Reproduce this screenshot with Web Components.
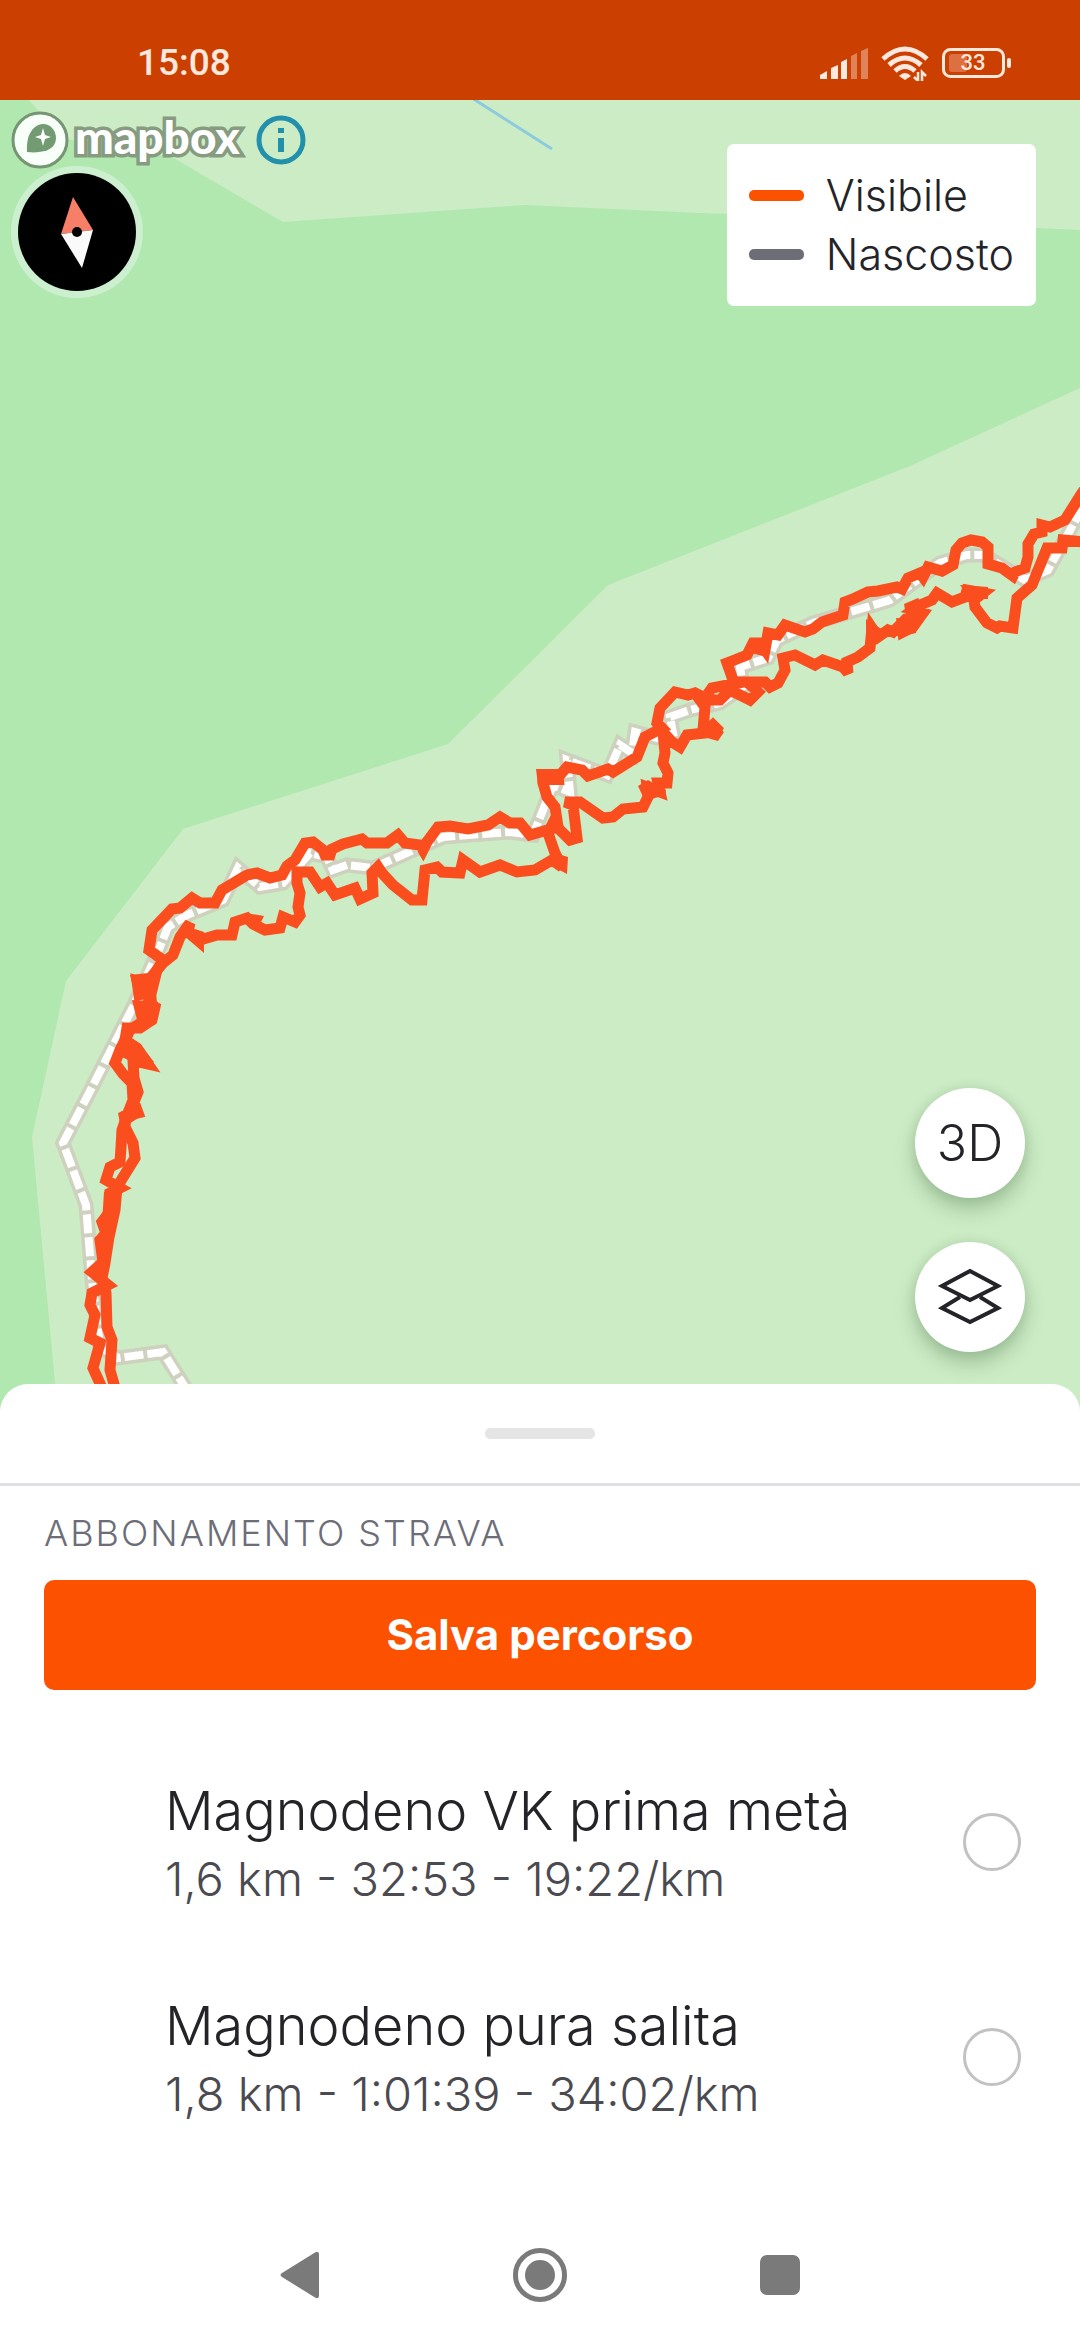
<!DOCTYPE html>
<html lang="it">
<head>
<meta charset="utf-8">
<meta name="viewport" content="width=device-width, initial-scale=1">
<title>Percorso</title>
<style>
  html, body { margin: 0; height: 100%; }
  body { font-family: Inter, "Liberation Sans", sans-serif; color: #242428; background: #fff; }
</style>
</head>
<body>
<route-screen></route-screen>

<script>
const define = (name, html, setup) => {
  const tpl = document.createElement('template');
  tpl.innerHTML = html;
  customElements.define(name, class extends HTMLElement {
    constructor() {
      super();
      this.attachShadow({ mode: 'open' }).append(tpl.content.cloneNode(true));
    }
    connectedCallback() { if (setup) setup(this, this.shadowRoot); }
  });
};

define('status-bar', `
<style>
  :host { display: flex; justify-content: space-between; align-items: center; height: 100px; box-sizing: border-box;
    padding: 26px 68px 0 137px; background: #cb4000; color: #ffe9df; font-family: Roboto, sans-serif; font-weight: 500; }
  .time { font-size: 37px; line-height: 44px; }
  .icons { display: flex; align-items: center; gap: 13px; }
  svg { display: block; }
  .battery { display: grid; place-items: center; width: 70px; height: 30px; font-size: 22px; line-height: 30px; }
  .battery > * { grid-area: 1 / 1; }
  .battery span { justify-self: start; width: 62px; text-align: center; }
</style>
<span class="time">15:08</span>
<div class="icons">
  <svg width="48" height="36" viewBox="819 44 48 36" fill="#ffe9df" aria-label="Segnale">
    <path d="M819 78v-4l7-4v8zM830 78V67l7-3v14zM840 78V61l6-3v20z"/>
    <path opacity=".4" d="M850 78V55l6-3v26zM860 78V50l7-3v31z"/>
  </svg>
  <svg width="48" height="36" viewBox="879 44 48 36" fill="none" stroke="#ffe9df" stroke-width="5" aria-label="Wi-Fi">
    <path d="M881 58q22-20 44 0M887 64q16-14 32 0M893 70q10-9 20 0"/>
    <path d="M897 75q6-6 12 0l-6 4z" fill="#ffe9df" stroke="none"/>
    <path d="M916 71v9l-4-4M920 80v-9l4 4" stroke-width="2.5"/>
  </svg>
  <div class="battery">
    <svg width="70" height="30" viewBox="941 47 70 30">
      <rect x="948" y="53" width="18" height="18" rx="3" fill="#dc7040"/>
      <rect x="942.5" y="48.5" width="60" height="27" rx="7" fill="none" stroke="#ffe9df" stroke-width="3"/>
      <rect x="1006" y="57" width="4" height="10" rx="2" fill="#ffe9df"/>
    </svg>
    <span>33</span>
  </div>
</div>`);

define('map-legend', `
<style>
  :host { display: block; background: #fff; border-radius: 7px; padding: 22px; font-weight: 300; font-size: 43px; line-height: 59px; }
  ul { list-style: none; margin: 0; padding: 0; }
  li { display: flex; align-items: center; gap: 22px; }
  i { width: 55px; height: 11px; border-radius: 5px; background: #fc5200; }
  .hidden i { background: #6d6d78; }
</style>
<ul><li><i></i>Visibile</li><li class="hidden"><i></i>Nascosto</li></ul>`);

define('map-button', `
<style>
  :host { display: block; }
  button { display: grid; place-items: center; width: 110px; height: 110px; border: 0; padding: 0; border-radius: 50%;
    background: #fff; color: #242428; font: 300 50px/60px Inter, sans-serif; box-shadow: 0 11px 20px rgba(40,80,40,.28), 0 0 12px rgba(40,80,40,.1); }
</style>
<button type="button"><slot></slot></button>`, (el, root) => {
  root.querySelector('button').setAttribute('aria-label', el.getAttribute('label'));
});

define('map-attribution', `
<style>
  :host { display: flex; align-items: center; gap: 8px; }
  a, button { display: flex; align-items: center; padding: 0; border: 0; background: none; color: #fff; text-decoration: none; }
  .word { padding-bottom: 6px; font: 900 46px/54px Lato, sans-serif; -webkit-text-stroke: 7px #869b80; paint-order: stroke fill; }
  .brand { gap: 6px; height: 60px; }
  button { margin-left: 8px; }
  svg { display: block; }
</style>
<a class="brand" href="#mapbox">
  <svg width="58" height="60" viewBox="0 0 58 60">
    <circle cx="29" cy="30" r="27" fill="#f8fff8" stroke="#759573" stroke-width="3"/>
    <path d="M16 42C15 26 21 15 32 14c8 0 13 7 13 14 0 10-10 16-29 14z" fill="#729b74"/>
    <path d="M32 18l2 7 6 2-6 2-2 7-2-7-6-2 6-2z" fill="#fff"/>
  </svg>
  <span class="word">mapbox</span>
</a>
<button type="button" aria-label="Informazioni">
  <svg width="50" height="50" viewBox="0 0 50 50">
    <circle cx="25" cy="25" r="22" fill="none" stroke="#2390ab" stroke-width="5"/>
    <path d="M22 13h6v5h-6zM22 23h6v14h-6z" fill="#2390ab"/>
  </svg>
</button>`);

define('route-map', `
<style>
  :host { display: block; position: relative; overflow: hidden; background: #b0e8af; }
  .canvas { display: block; position: absolute; inset: 0; width: 100%; height: 100%; }
  map-attribution { position: absolute; left: 11px; top: 10px; }
  .compass { position: absolute; left: 10px; top: 65px; padding: 0; border: 0; background: none; }
  .compass svg { display: block; }
  map-legend { position: absolute; right: 44px; top: 44px; }
  .tools { position: absolute; right: 55px; bottom: 60px; display: flex; flex-direction: column; gap: 44px; }
</style>
<svg class="canvas" viewBox="0 100 1080 1313" preserveAspectRatio="xMidYMin slice" aria-hidden="true">
  <g fill="#ccecc5">
    <path d="M29 100L62 138 90 144 172 157 283 222 525 205 700 213 880 219 1036 228 1080 230V100z"/>
    <path d="M1080 388L910 466 608 585 448 744 183 829 66 981 32 1137 55 1383 60 1413H1080z"/>
  </g>
  <path d="M472 98L552 149" fill="none" stroke="#8ccbdc" stroke-width="3"/>
  <g fill="none">
    <path stroke="#cdd1bd" stroke-width="15" d="M1084 505L1048 570 1025 580 983 555 967 555 940 563 890 600 867 607 813 623 777 640 768 658 740 667 743 687 720 703 690 710 670 717 673 733 657 738 635 732 632 753 620 745 607 775 567 760 570 792 553 785 533 835 510 832 443 837 420 847 373 868 347 865 333 870 327 857 310 853 283 883 260 887 238 868 223 900 187 915 168 927 160 947 133 1007 87 1097 63 1143 86 1205 92 1280 100 1347 118 1358 163 1352 190 1395"/>
    <path stroke="#fff" stroke-width="8" stroke-dasharray="19 4" d="M1084 505L1048 570 1025 580 983 555 967 555 940 563 890 600 867 607 813 623 777 640 768 658 740 667 743 687 720 703 690 710 670 717 673 733 657 738 635 732 632 753 620 745 607 775 567 760 570 792 553 785 533 835 510 832 443 837 420 847 373 868 347 865 333 870 327 857 310 853 283 883 260 887 238 868 223 900 187 915 168 927 160 947 133 1007 87 1097 63 1143 86 1205 92 1280 100 1347 118 1358 163 1352 190 1395"/>
  </g>
  <g fill="none" stroke="#fb4e1f" stroke-width="11" stroke-miterlimit="3">
    <path d="M1084 490L1080 496 1065 520 1050 527 1042 525 1042 532 1034 534 1028 544 1028 557 1025 568 1015 572 1013 576 1002 568 988 564 988 547 982 542 971 540 962 543 956 550 953 565 942 571 928 567 923 577 920 573 908 578 902 589 897 587 878 591 868 592 853 599 845 602 843 615 822 622 813 629 805 632 785 625 778 635 768 633 765 650 760 643 753 643 747 655 732 661 727 663 733 680 738 683 712 688 705 698 695 693 688 695 675 692 660 708 657 723 662 728 645 737 637 757 613 772 608 769 588 776 582 770 567 767 560 775 543 775 543 783 547 797 555 807 557 820 558 827 530 835 520 823 510 823 500 817 488 825 468 829 450 826 438 827 427 842 423 850 420 845 405 843 398 835 387 843 367 843 362 839 343 844 332 849 330 855 325 855 323 850 313 842 305 843 295 860 287 866 282 875 270 878 257 873 247 875 222 890 215 903 200 903 192 898 180 908 172 909 152 930 149 950 163 960 157 970 152 990 148 1003 155 1007 152 1020 140 1028 127 1028 125 1040 137 1048 148 1064 139 1062 133 1060 134 1078 138 1092 134 1102 138 1113 126 1116 125 1127 133 1143 135 1158 117 1187 115 1210 109 1237 105 1263 102 1278 106 1293 107 1327 112 1340 110 1370 117 1395"/>
    <path d="M1084 542L1063 540 1062 548 1047 548 1032 585 1017 598 1013 628 1000 626 997 628 987 623 975 607 974 600 983 593 967 590 965 597 952 602 937 593 932 600 920 605 913 610 923 613 913 627 903 632 902 623 893 632 888 630 878 637 872 628 870 648 858 657 847 662 848 673 843 667 823 660 815 665 795 655 783 658 785 670 778 683 770 687 765 682 747 682 758 692 750 700 730 690 720 700 700 700 705 707 703 730 720 732 713 725 705 733 687 735 680 747 672 742 663 732 665 753 663 763 668 773 667 783 658 783 660 792 647 787 648 797 643 807 623 809 613 817 603 818 580 802 565 802 573 805 577 838 570 840 553 823 548 833 555 853 562 867 552 860 535 870 517 872 500 865 480 872 463 860 460 873 442 872 437 867 425 870 422 900 412 900 393 885 382 873 378 867 372 873 373 893 360 899 355 888 335 895 327 883 320 887 310 872 297 872 297 883 300 893 298 907 300 915 295 922 283 917 280 928 265 930 253 924 247 918 235 922 232 935 217 935 200 940 188 932 190 923 180 937 173 955 163 963 153 975 150 985 137 981 139 995 150 990 152 1007 145 1020 130 1030 120 1050 115 1063 123 1074 132 1083 133 1100 128 1113 122 1130 121 1147 120 1162 110 1167 106 1180 120 1188 110 1193 111 1210 102 1222 106 1233 100 1240 103 1262 92 1272 108 1285 92 1293 90 1305 95 1315 90 1338 100 1343 93 1368 102 1388"/>
  </g>
  <path fill="#fb4e1f" d="M130 975l27-3-1 30-20-4zM536 769h28v16h-26zM132 1000l26 2-2 22-16 8zM118 1045l24 2 12 15-8 7-24-12zM551 852l17 5-1 17-15-8zM705 718l19 14-6 9-18-5zM904 604l14-6 10 14-7 10-14-1zM960 585l28 2v12h-18zM183 935l12-6 9 3v21zM246 913l18 3-6 12-12-4zM638 786l10-6 18 10-1 5-20 6zM896 618l22 2-2 13-17 4zM866 619l17 11-7 14-10-6zM118 1113l20-8 5 10-22 14zM104 1192h15l-6 44-12 2zM100 1240h10l-2 28-12 4zM753 638l14 4-4 14-12-3z"/>
</svg>
<map-attribution></map-attribution>
<button class="compass" type="button" aria-label="Bussola">
  <svg width="134" height="134" viewBox="0 0 134 134">
    <circle cx="67" cy="67" r="66" fill="#ccf0cf"/><circle cx="67" cy="67" r="59"/>
    <path d="M63 32L83 65 51 69z" fill="#f77f67"/><path d="M51 69L83 65 72 103z" fill="#fafafa"/>
    <circle cx="67" cy="67" r="5"/>
  </svg>
</button>
<map-legend></map-legend>
<div class="tools">
  <map-button label="3D">3D</map-button>
  <map-button label="Livelli">
    <svg width="66" height="58" viewBox="0 0 66 58" fill="none" stroke="#242428" stroke-width="4">
      <path d="M33 3L61 18 33 32 5 18z"/><path d="M23 29L5 40 33 54 61 40 43 29"/>
    </svg>
  </map-button>
</div>`);

define('route-option', `
<style>
  :host { display: block; }
  label { display: flex; align-items: center; justify-content: space-between; height: 215px; padding: 0 59px 0 165px; }
  .text { padding-top: 6px; font-weight: 300; }
  .title, .meta { display: block; line-height: 68px; }
  .title { font-size: 54px; }
  .meta { font-size: 47px; color: #4b4a50; }
  input { appearance: none; flex: none; width: 58px; height: 58px; margin: 0; border: 3px solid #c2c2c2; border-radius: 50%; }
  input:checked { border: 16px solid #fc5200; }
</style>
<label for="pick">
  <span class="text"><slot class="title" name="title"></slot><slot class="meta" name="meta"></slot></span>
  <input type="radio" id="pick" name="route">
</label>`);

define('bottom-sheet', `
<style>
  :host { display: block; position: relative; background: #fff; border-radius: 28px 28px 0 0; }
  .grip { display: flex; justify-content: center; padding: 44px 0; border-bottom: 3px solid #dfdfe6; }
  .grip i { width: 110px; height: 11px; border-radius: 5px; background: #e5e5e5; }
  h2 { margin: 0; padding: 22px 44px; font-size: 36px; line-height: 50px; font-weight: 300; letter-spacing: 2px; color: #6d6d78; }
  .save { display: block; width: calc(100% - 88px); height: 110px; margin: 0 44px 44px; border: 0; border-radius: 10px;
    background: #fc5200; color: #fff; font: 700 42px/56px Inter, sans-serif; }
</style>
<div class="grip"><i></i></div>
<h2>ABBONAMENTO STRAVA</h2>
<button class="save" type="button">Salva percorso</button>
<slot></slot>`);

define('system-nav', `
<style>
  :host { display: flex; justify-content: center; align-items: center; gap: 160px; height: 130px; padding-top: 46px; background: #fff; }
  button { display: grid; place-items: center; width: 80px; height: 80px; padding: 0; border: 0; background: none; }
  svg { display: block; fill: #7a7a7a; }
</style>
<button type="button" aria-label="Indietro"><svg width="60" height="60" viewBox="0 0 60 60"><path d="M12 28L45 7.500q4-2 4 2v41q0 4-4 2L12 32q-3-2 0-4z"/></svg></button>
<button type="button" aria-label="Home"><svg width="60" height="60" viewBox="0 0 60 60"><circle cx="30" cy="30" r="24.500" fill="none" stroke="#7a7a7a" stroke-width="5"/><circle cx="30" cy="30" r="15"/></svg></button>
<button type="button" aria-label="Recenti"><svg width="60" height="60" viewBox="0 0 60 60"><rect x="10" y="10" width="40" height="40" rx="7"/></svg></button>`);

define('route-screen', `
<style>
  :host { display: flex; flex-direction: column; min-height: 100vh; }
  route-map { flex: 1; min-height: 700px; }
  bottom-sheet { margin-top: -28px; }
</style>
<status-bar></status-bar>
<route-map></route-map>
<bottom-sheet>
  <route-option><span slot="title">Magnodeno VK prima metà</span><span slot="meta">1,6 km - 32:53 - 19:22/km</span></route-option>
  <route-option><span slot="title">Magnodeno pura salita</span><span slot="meta">1,8 km - 1:01:39 - 34:02/km</span></route-option>
</bottom-sheet>
<system-nav></system-nav>`);
</script>
</body>
</html>
